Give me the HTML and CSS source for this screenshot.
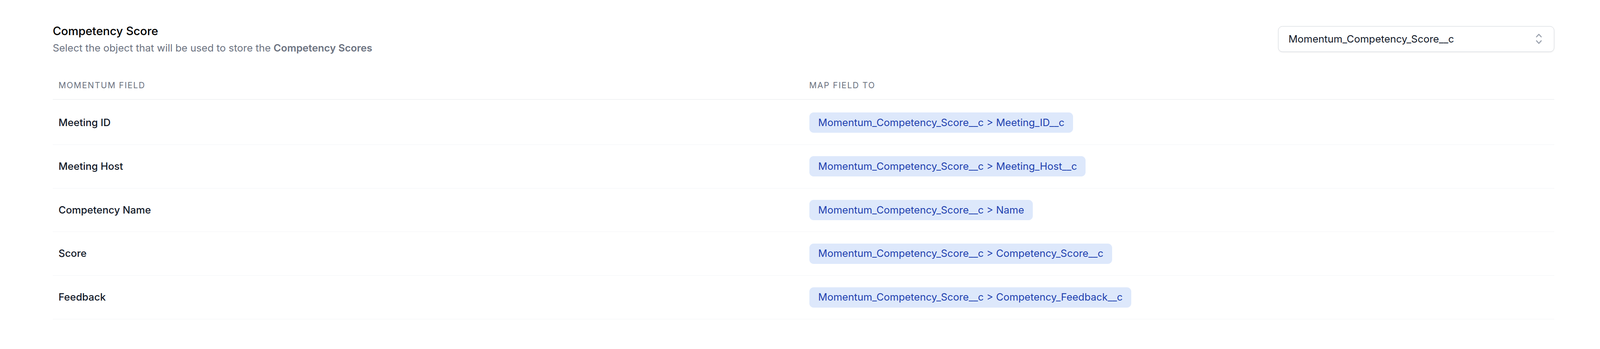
FILE: index.html
```html
<!DOCTYPE html>
<html lang="en">
<head>
<meta charset="utf-8">
<title>Competency Score</title>
<link rel="stylesheet" href="styles.css">
</head>
<body>
<div class="page">
  <div class="head">
    <div class="intro">
      <h2 class="title">Competency Score</h2>
      <p class="subtitle">Select the object that will be used to store the <strong>Competency Scores</strong></p>
    </div>
    <div class="select">
      <span class="select-value">Momentum_Competency_Score__c</span>
      <svg class="select-icon" viewBox="0 0 20 20" aria-hidden="true"><path fill-rule="evenodd" d="M10 3a.75.75 0 01.55.24l3.25 3.5a.75.75 0 11-1.1 1.02L10 4.852 7.3 7.76a.75.75 0 01-1.1-1.02l3.25-3.5A.75.75 0 0110 3zm-3.76 9.2a.75.75 0 011.06.04l2.7 2.908 2.7-2.908a.75.75 0 111.1 1.02l-3.25 3.5a.75.75 0 01-1.1 0l-3.25-3.5a.75.75 0 01.04-1.06z" clip-rule="evenodd"/></svg>
    </div>
  </div>

  <div class="table">
    <div class="row row-head">
      <div class="cell th">Momentum Field</div>
      <div class="cell th">Map Field To</div>
    </div>
    <div class="row row-first">
      <div class="cell label">Meeting ID</div>
      <div class="cell"><span class="badge">Momentum_Competency_Score__c &gt; Meeting_ID__c</span></div>
    </div>
    <div class="row">
      <div class="cell label">Meeting Host</div>
      <div class="cell"><span class="badge">Momentum_Competency_Score__c &gt; Meeting_Host__c</span></div>
    </div>
    <div class="row">
      <div class="cell label">Competency Name</div>
      <div class="cell"><span class="badge">Momentum_Competency_Score__c &gt; Name</span></div>
    </div>
    <div class="row">
      <div class="cell label">Score</div>
      <div class="cell"><span class="badge">Momentum_Competency_Score__c &gt; Competency_Score__c</span></div>
    </div>
    <div class="row">
      <div class="cell label">Feedback</div>
      <div class="cell"><span class="badge">Momentum_Competency_Score__c &gt; Competency_Feedback__c</span></div>
    </div>
  </div>
</div>
</body>
</html>
```

FILE: styles.css
```css
* { box-sizing: border-box; }
/* 1rem = 32 screenshot pixels across a 4432px-wide window */
html { font-size: calc(100vw * 32 / 4432); }
html, body { margin: 0; padding: 0; background: #ffffff; }
body {
  font-family: Inter, "Noto Sans", "Liberation Sans", sans-serif;
  color: #111827;
}
.page {
  padding: 1.9375rem 3.97rem 0 4.5625rem;
}
.head {
  display: flex;
  align-items: center;
  justify-content: space-between;
}
.title {
  margin: 0;
  font-size: 1rem;
  line-height: 1.5rem;
  font-weight: 500;
  color: #000000;
}
.subtitle {
  margin: 0.125rem 0 0;
  font-size: 0.875rem;
  line-height: 1.25rem;
  color: #6b7280;
}
.subtitle strong { font-weight: 600; }
.select {
  width: 23.906rem;
  height: 2.219rem;
  display: flex;
  align-items: center;
  justify-content: space-between;
  padding: 0 0.656rem 0 0.875rem;
  border: 0.0625rem solid #d1d5db;
  border-radius: 0.375rem;
  background: #ffffff;
  box-shadow: 0 0.0625rem 0.125rem rgba(0, 0, 0, 0.05);
  font-size: 0.875rem;
  line-height: 1.5rem;
  color: #111827;
}
.select-icon {
  width: 1.25rem;
  height: 1.25rem;
  fill: #9ca3af;
  flex: none;
}
.table { margin-top: 1.344rem; }
.row {
  display: grid;
  grid-template-columns: 1fr 1fr;
  align-items: center;
  border-bottom: 0.0625rem solid #f3f4f6;
}
.row-head { border-bottom-color: #e5e7eb; }
.cell {
  padding: 1rem 0.5rem;
  display: flex;
  align-items: center;
}
.row-first .cell { padding-top: 1.125rem; }
.th {
  padding: 0.75rem 0.5rem 0.6875rem;
  font-size: 0.72rem;
  line-height: 1rem;
  font-weight: 400;
  text-transform: uppercase;
  letter-spacing: 0.062rem;
  color: #6b7280;
}
.label {
  font-size: 0.875rem;
  line-height: 1.25rem;
  font-weight: 500;
  color: #111827;
}
.badge {
  display: inline-flex;
  align-items: center;
  height: 1.75rem;
  padding: 0 0.75rem 0 0.78rem;
  border-radius: 0.375rem;
  background: #dde8fb;
  color: #1e40af;
  font-size: 0.875rem;
  line-height: 1.25rem;
}
```
